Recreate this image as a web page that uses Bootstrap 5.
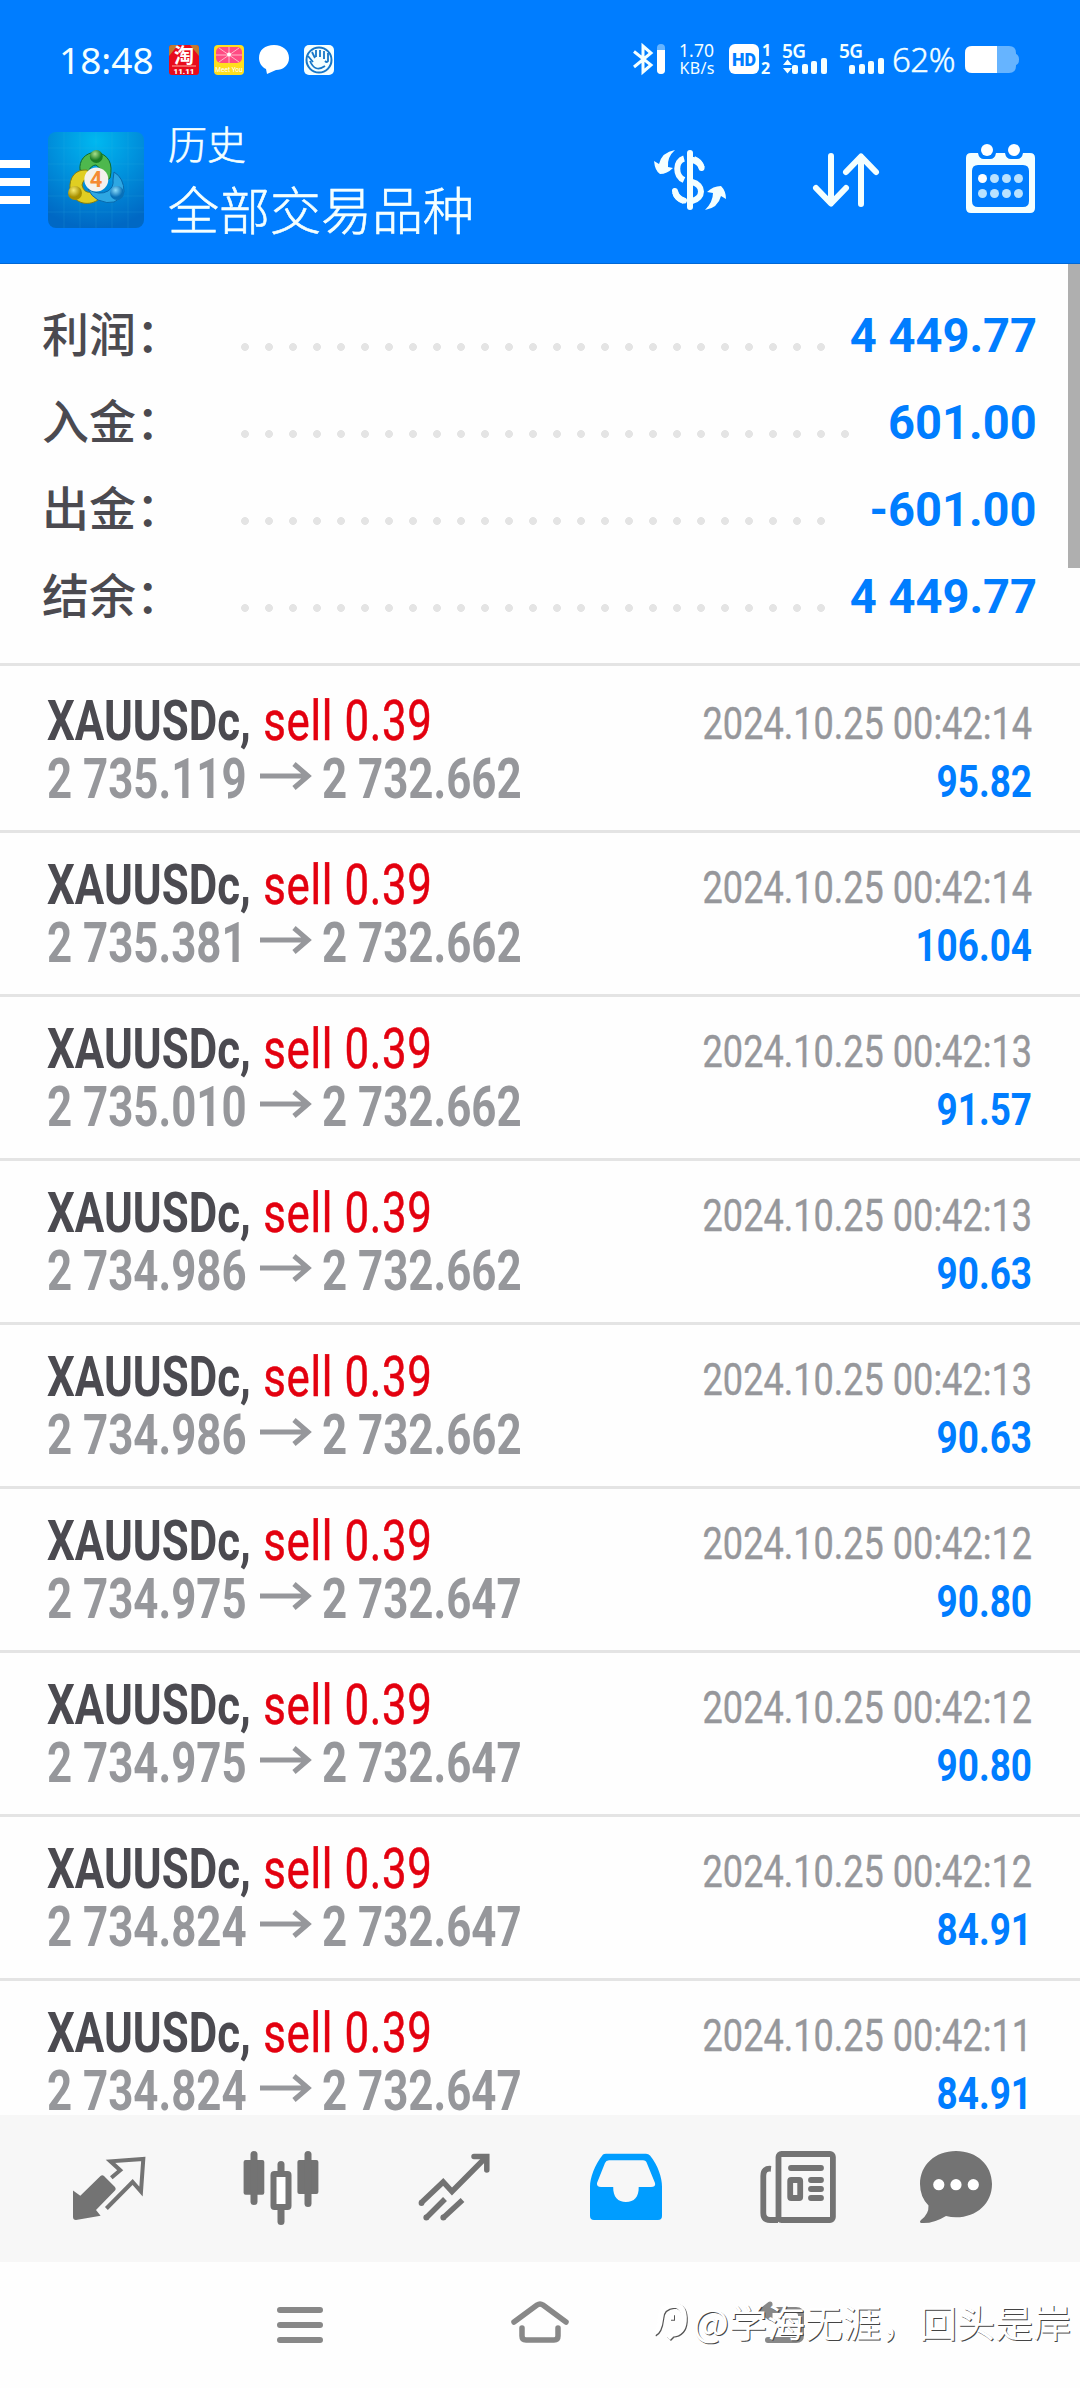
<!DOCTYPE html>
<html lang="zh-CN">
<head>
<meta charset="utf-8">
<meta name="viewport" content="width=device-width, initial-scale=1">
<title>历史</title>
<link href="https://cdn.jsdelivr.net/npm/bootstrap@5.3.0/dist/css/bootstrap.min.css" rel="stylesheet">
<script src="https://cdn.jsdelivr.net/npm/bootstrap@5.3.0/dist/js/bootstrap.bundle.min.js"></script>
<style>
body{width:1080px;height:2388px;background:#fefefe;font-family:Roboto,"Noto Sans CJK SC",sans-serif;color:#4b4a50}
svg{display:block;flex:none;overflow:visible}
.topbar{height:264px;background:#007dff;color:#f4ffff;border-bottom:1px solid #0068d6}
.statusbar{height:106px;padding:14px 60px 0 59px}
.clock{font:400 37px/90px "Noto Sans",sans-serif;width:109px}
.percent{font:300 33px/90px "Noto Sans",sans-serif;width:73px;letter-spacing:-.5px;-webkit-text-stroke:.4px #f4ffff}
.titles{font-family:"Noto Sans CJK SC",sans-serif;font-weight:300;-webkit-text-stroke:.6px #f4ffff;width:480px;flex:none;padding-left:24px}
.t-small{font-size:39px;line-height:52px;margin-top:10px}
.t-big{font-size:51px;line-height:80px}
.summary{height:402px;padding:28px 0 0 43px;border-bottom:3px solid #e4e4e4}
.sumrow{height:87px;line-height:87px}
.sumlabel{font:500 47px/81px "Noto Sans CJK SC",sans-serif;width:198px;flex:none;margin-top:-9px;margin-left:-1px;margin-right:1px}
.leader{flex:none;height:8px;margin-top:23px;background:radial-gradient(circle at 4px 4px,#e4e4e4 3.6px,transparent 4.2px) 0 0/24px 8px repeat-x}
.sumval{color:#007dff;font-weight:700;font-size:48px;flex:none;margin-left:auto;margin-right:43px;text-align:right}
.sumval span{display:inline-block;transform:scaleX(.98);transform-origin:right}
.viewport{height:1449px;overflow:hidden}
.deal{height:164px;border-top:3px solid #e4e4e4;padding:23px 48px 0 47px;line-height:58px;white-space:nowrap}
.deal:first-child{border-top-color:#fefefe}
.sym,.from,.to,.stamp,.gain{font-size:55px;height:58px}
.sym span,.from,.to{display:block;transform:scaleX(.797);transform-origin:left}
.sym{width:400px}.sym b{font-weight:700}.sym i{font-style:normal;color:#e3000f;letter-spacing:.8px;margin-left:2px;-webkit-text-stroke:.5px #e3000f}
.from,.to{color:#96979b;font-weight:700}
.from{width:213px}.to{width:200px}
.route{height:58px}
.arrow{margin:0 10px 7px 0}
.side{width:400px;padding-top:3px}
.stamp,.gain{display:flex;justify-content:flex-end;font-size:45px;transform:scaleX(.802);transform-origin:right}
.stamp{color:#96979b;-webkit-text-stroke:.4px #96979b}
.gain{color:#007dff;font-weight:700;transform:scaleX(.82)}
.tabs{height:147px;background:#f7f7f7;padding:32px 0 0 23px;color:#737373}
.tab{width:172.3px}.tab-last{width:144px}
.sysnav{height:126px;position:relative}
.scroll{position:absolute;right:0;top:264px;width:12px;height:304px;background:#afafaf}
.wmark{position:absolute;left:652px;top:31px;color:#fff;font:400 38px/56px "Noto Sans CJK SC",sans-serif;text-shadow:1px 1px 0 #444;white-space:nowrap}
</style>
</head>
<body class="position-relative overflow-hidden">
<svg width="0" height="0" class="position-absolute"><symbol id="arr" viewBox="0 0 52 28"><path d="M0 14H48M34 2L48 14L34 26" fill="none" stroke="#96979b" stroke-width="5"/></symbol></svg>

<header class="topbar">
  <div class="statusbar d-flex align-items-center">
    <div class="clock">18:48</div>
    <svg width="170" height="32" viewBox="0 0 170 32">
      <rect x="1" y="1" width="30" height="30" rx="3" fill="#e80b1c"/><path d="M1 4q0-3 3-3h6L1 12zM22 1h6q3 0 3 3v8z" fill="#c27a30"/><path d="M4 22h24" stroke="#ffb0a0" stroke-width="1"/>
      <text x="16" y="19" font-family="Noto Sans CJK SC" font-weight="700" font-size="20" fill="#fff" text-anchor="middle">淘</text>
      <text x="16" y="30" font-family="Roboto" font-weight="900" font-size="8" fill="#fff" text-anchor="middle">11.11</text>
      <rect x="46" y="1" width="30" height="30" rx="4" fill="#ffdf1e"/><rect x="48" y="3" width="26" height="16" rx="5" fill="#ff4c84"/><path d="M61 3v16M48 11h26M51 4l20 14M71 4L51 18" stroke="#ffb5c8" stroke-width="1"/><circle cx="61" cy="10.500" r="2" fill="#fff"/>
      <text x="61" y="28" font-family="Roboto" font-size="6.500" fill="#fff" text-anchor="middle">Meet You</text>
      <path d="M106 1c9 0 15 5.500 15 13s-6 12-13 12l-9 4-1-5c-4-2-7-6-7-11 0-8 6-13 15-13z" fill="#fff"/>
      <rect x="136" y="1" width="30" height="30" rx="5" fill="#f4ffff"/><circle cx="151" cy="16" r="12.500" fill="none" stroke="#1677c8" stroke-width="2"/><path d="M140 12l5 6M144 8l3 6M148 6v7M152 6v7M156 7v8M160 9v8q-1 2-3 0M142 17q5 12 15 5" fill="none" stroke="#1677c8" stroke-width="1.800"/>
    </svg>
    <svg class="ms-auto" width="256" height="40" viewBox="0 0 256 40" fill="#f4ffff">
      <path d="M2 11.500L19 25l-8 7V6l8 7L2 27" fill="none" stroke="#f4ffff" stroke-width="3"/>
      <rect x="25" y="4" width="8" height="30" rx="4" fill="#66b4ff"/><path d="M25 10h8v20a4 4 0 0 1-8 0z" fill="#fff"/>
      <g font-family="Noto Sans,sans-serif" font-size="17.500"><text x="47" y="17" textLength="35">1.70</text><text x="47.500" y="34" font-size="16" textLength="35">KB/s</text></g>
      <rect x="97" y="4" width="30" height="30" rx="6" fill="#fff"/><text x="112" y="25.500" font-family="Roboto" font-weight="900" font-size="18" fill="#007dff" text-anchor="middle" textLength="24" lengthAdjust="spacingAndGlyphs">HD</text>
      <g font-family="Noto Sans,sans-serif" font-weight="700" font-size="16"><text x="130" y="16">1</text><text x="129" y="34">2</text></g>
      <g font-family="Noto Sans,sans-serif" font-weight="600" font-size="19"><text x="150" y="18" textLength="24">5G</text><text x="207" y="18" textLength="24">5G</text></g>
      <path d="M151 25l4.500-5.500L160 25zM151 28h9l-4.500 5.500z"/>
      <g id="bars"><rect x="160" y="25" width="6" height="9" rx="2"/><rect x="170" y="24" width="6" height="10" rx="2"/><rect x="179" y="21" width="6" height="13" rx="2"/><rect x="189" y="18" width="6" height="16" rx="2"/></g>
      <use href="#bars" x="57"/>
    </svg>
    <div class="percent ms-1">62%</div>
    <svg width="55" height="28" viewBox="0 0 55 28"><path d="M7 0h37q7 0 7 7v1q3 1 3 5.500T51 19v1q0 7-7 7H7q-7 0-7-7V7q0-7 7-7z" fill="#66b4ff"/><path d="M7 0h25v27H7q-7 0-7-7V7q0-7 7-7z" fill="#fff"/></svg>
  </div>
  <div class="d-flex">
    <svg width="48" height="96" class="mt-4" viewBox="0 0 48 96"><path d="M0 34h30M0 52h30M0 70h30" stroke="#fff" stroke-width="8"/></svg>
    <svg width="96" height="96" viewBox="0 0 96 96" style="margin-top:26px">
      <defs><radialGradient id="bg" cx=".5" cy=".1" r=".9"><stop offset="0" stop-color="#00b8f0"/><stop offset=".5" stop-color="#0090dc"/><stop offset="1" stop-color="#0068c4"/></radialGradient>
      <radialGradient id="gg" cx=".4" cy=".3"><stop offset="0" stop-color="#a8e08c"/><stop offset="1" stop-color="#1a7d24"/></radialGradient>
      <radialGradient id="gy" cx=".4" cy=".3"><stop offset="0" stop-color="#f8ec70"/><stop offset="1" stop-color="#a89000"/></radialGradient>
      <radialGradient id="gb" cx=".4" cy=".3"><stop offset="0" stop-color="#8cdcfa"/><stop offset="1" stop-color="#0870b8"/></radialGradient></defs>
      <rect width="96" height="96" rx="8" fill="url(#bg)"/>
      <path d="M16 0v96M32 0v96M48 0v96M64 0v96M80 0v96M0 16h96M0 32h96M0 48h96M0 64h96M0 80h96" stroke="#38c0ee" stroke-opacity=".15"/>
      <path d="M48 20C36 21 31 29 32 38L40 40Q43 33 48 33Q56 38 57 50L62 46Q67 24 48 20z" fill="#4eb84d" stroke="#106c30"/>
      <path d="M39 38C27 37 21 46 22 57C25 71 39 75 50 68L44 60Q36 62 34 53Q35 47 42 44z" fill="#e0ce22" stroke="#857e10"/>
      <path d="M66 40Q76 46 76 60Q69 76 50 68Q43 64 40 57Q51 64 60 59Q66 55 65 48z" fill="#2da7e3" stroke="#0868ac"/>
      <circle cx="48.300" cy="24.500" r="6.500" fill="url(#gg)"/><circle cx="27" cy="61" r="7" fill="url(#gy)"/><circle cx="69" cy="61" r="7" fill="url(#gb)"/>
      <circle cx="48.300" cy="47.500" r="12" fill="#f4f1ed"/><text x="48" y="55" font-family="Roboto" font-weight="700" font-size="22" text-anchor="middle" fill="#f58a32">4</text>
    </svg>
    <div class="titles"><div class="t-small">历史</div><div class="t-big">全部交易品种</div></div>
    <svg width="76" height="66" viewBox="650 147 76 66" style="margin:41px 0 0 26px">
      <g fill="none" stroke="#f4ffff" stroke-width="6"><path d="M690 153V207" stroke-linecap="round"/><path d="M684 158.500C675 161 675 176 684 180M675 192Q677 199 684 201M694 159Q700 161 702 168" stroke-width="6"/><path d="M675 191q1 7 9 9.500M693 160q7 2 8.500 8" stroke-linecap="round"/><path d="M692 182C704 185 704 198 692 201"/></g>
      <g fill="#f4ffff"><path d="M675 150Q662 152 659 164L654 161Q655 171 660 174Q667 174 673 168L668 167Q667 157 675 150z"/><path d="M705 210Q718 208 721 196L726 199Q726 191 721 186Q713 186 707 192L713 193Q713 202 705 210z"/></g>
    </svg>
    <svg width="70" height="60" viewBox="811 150 70 60" style="margin:44px 0 0 85px"><path d="M831 156V203M816 188L831 203.500L846 188M861 204V157M846 172L861 156.500L876 172" fill="none" stroke="#f4ffff" stroke-width="6" stroke-linecap="round" stroke-linejoin="round"/></svg>
    <svg width="70" height="70" viewBox="966 144 70 70" style="margin:38px 0 0 85px">
      <path fill-rule="evenodd" d="M971 153H978Q979 159 984 159H990Q995 159 996 153H1005Q1006 159 1011 159H1017Q1022 159 1023 153H1030Q1035 153 1035 158V208Q1035 213 1030 213H971Q966 213 966 208V158Q966 153 971 153zM978 165Q972 165 972 171V201Q972 207 978 207H1023Q1029 207 1029 201V171Q1029 165 1023 165z" fill="#f4ffff"/>
      <g fill="#fff"><circle cx="987" cy="150" r="6"/><circle cx="1014" cy="150" r="6"/><circle cx="982.500" cy="178.500" r="4.500"/></g>
      <g fill="#b9e2ff"><circle cx="994.500" cy="178.500" r="4.500"/><circle cx="1006.500" cy="178.500" r="4.500"/><circle cx="1018.500" cy="178.500" r="4.500"/><circle cx="982.500" cy="193.500" r="4.500"/><circle cx="994.500" cy="193.500" r="4.500"/><circle cx="1006.500" cy="193.500" r="4.500"/><circle cx="1018.500" cy="193.500" r="4.500"/></g>
    </svg>
  </div>
</header>

<section class="summary">
  <div class="sumrow d-flex align-items-center"><div class="sumlabel">利润：</div><div class="leader" style="width:600px"></div><div class="sumval ms-auto"><span>4 449.77</span></div></div>
  <div class="sumrow d-flex align-items-center"><div class="sumlabel">入金：</div><div class="leader" style="width:624px"></div><div class="sumval ms-auto"><span>601.00</span></div></div>
  <div class="sumrow d-flex align-items-center"><div class="sumlabel">出金：</div><div class="leader" style="width:600px"></div><div class="sumval ms-auto"><span>-601.00</span></div></div>
  <div class="sumrow d-flex align-items-center"><div class="sumlabel">结余：</div><div class="leader" style="width:600px"></div><div class="sumval ms-auto"><span>4 449.77</span></div></div>
</section>

<main class="viewport">
  <div class="deal d-flex justify-content-between"><div><div class="sym"><span><b>XAUUSDc,</b> <i>sell 0.39</i></span></div><div class="route d-flex align-items-center"><div class="from">2 735.119</div><svg class="arrow" width="52" height="28"><use href="#arr"/></svg><div class="to">2 732.662</div></div></div><div class="side"><div class="stamp">2024.10.25 00:42:14</div><div class="gain">95.82</div></div></div>
  <div class="deal d-flex justify-content-between"><div><div class="sym"><span><b>XAUUSDc,</b> <i>sell 0.39</i></span></div><div class="route d-flex align-items-center"><div class="from">2 735.381</div><svg class="arrow" width="52" height="28"><use href="#arr"/></svg><div class="to">2 732.662</div></div></div><div class="side"><div class="stamp">2024.10.25 00:42:14</div><div class="gain">106.04</div></div></div>
  <div class="deal d-flex justify-content-between"><div><div class="sym"><span><b>XAUUSDc,</b> <i>sell 0.39</i></span></div><div class="route d-flex align-items-center"><div class="from">2 735.010</div><svg class="arrow" width="52" height="28"><use href="#arr"/></svg><div class="to">2 732.662</div></div></div><div class="side"><div class="stamp">2024.10.25 00:42:13</div><div class="gain">91.57</div></div></div>
  <div class="deal d-flex justify-content-between"><div><div class="sym"><span><b>XAUUSDc,</b> <i>sell 0.39</i></span></div><div class="route d-flex align-items-center"><div class="from">2 734.986</div><svg class="arrow" width="52" height="28"><use href="#arr"/></svg><div class="to">2 732.662</div></div></div><div class="side"><div class="stamp">2024.10.25 00:42:13</div><div class="gain">90.63</div></div></div>
  <div class="deal d-flex justify-content-between"><div><div class="sym"><span><b>XAUUSDc,</b> <i>sell 0.39</i></span></div><div class="route d-flex align-items-center"><div class="from">2 734.986</div><svg class="arrow" width="52" height="28"><use href="#arr"/></svg><div class="to">2 732.662</div></div></div><div class="side"><div class="stamp">2024.10.25 00:42:13</div><div class="gain">90.63</div></div></div>
  <div class="deal d-flex justify-content-between"><div><div class="sym"><span><b>XAUUSDc,</b> <i>sell 0.39</i></span></div><div class="route d-flex align-items-center"><div class="from">2 734.975</div><svg class="arrow" width="52" height="28"><use href="#arr"/></svg><div class="to">2 732.647</div></div></div><div class="side"><div class="stamp">2024.10.25 00:42:12</div><div class="gain">90.80</div></div></div>
  <div class="deal d-flex justify-content-between"><div><div class="sym"><span><b>XAUUSDc,</b> <i>sell 0.39</i></span></div><div class="route d-flex align-items-center"><div class="from">2 734.975</div><svg class="arrow" width="52" height="28"><use href="#arr"/></svg><div class="to">2 732.647</div></div></div><div class="side"><div class="stamp">2024.10.25 00:42:12</div><div class="gain">90.80</div></div></div>
  <div class="deal d-flex justify-content-between"><div><div class="sym"><span><b>XAUUSDc,</b> <i>sell 0.39</i></span></div><div class="route d-flex align-items-center"><div class="from">2 734.824</div><svg class="arrow" width="52" height="28"><use href="#arr"/></svg><div class="to">2 732.647</div></div></div><div class="side"><div class="stamp">2024.10.25 00:42:12</div><div class="gain">84.91</div></div></div>
  <div class="deal d-flex justify-content-between"><div><div class="sym"><span><b>XAUUSDc,</b> <i>sell 0.39</i></span></div><div class="route d-flex align-items-center"><div class="from">2 734.824</div><svg class="arrow" width="52" height="28"><use href="#arr"/></svg><div class="to">2 732.647</div></div></div><div class="side"><div class="stamp">2024.10.25 00:42:11</div><div class="gain">84.91</div></div></div>
</main>

<nav class="tabs d-flex">
  <div class="tab d-flex justify-content-center"><svg width="80" height="80" viewBox="0 0 80 80"><path d="M4 43.500L11.300 48.700L31.500 29Q33.300 27.500 35 29L46 40Q47.500 42 46 43.500L27 63L31.600 68.700L7 73Q4 73 4 70z" fill="currentColor"/><path d="M42.300 30.700L51.200 23.200L41.500 14.300L74.300 12L72 44.500L63.600 35L37.400 61.500" fill="none" stroke="currentColor" stroke-width="4"/></svg></div>
  <div class="tab d-flex justify-content-center"><svg width="80" height="80" viewBox="0 0 80 80"><g fill="currentColor"><rect x="2.600" y="13" width="20.700" height="34.700" rx="2"/><rect x="9.500" y="4" width="7" height="54" rx="3.500"/><rect x="56.400" y="13" width="21" height="34" rx="2"/><rect x="63.500" y="4" width="7" height="56" rx="3.500"/><rect x="36.500" y="14" width="7" height="14" rx="3.500"/><rect x="36.500" y="60" width="7" height="18" rx="3.500"/></g><rect x="32.500" y="27" width="15" height="33" rx="1" fill="#fff" stroke="currentColor" stroke-width="6"/></svg></div>
  <div class="tab d-flex justify-content-center"><svg width="80" height="80" viewBox="0 0 80 80"><g fill="none" stroke="currentColor" stroke-width="5.500"><path d="M7 56L29.200 35L38 44.500L72.700 9.500"/><path d="M60 9.500H72.800V23" stroke-linecap="round"/><path d="M31 52L12 71M48.500 53L29 71"/></g><g fill="currentColor"><circle cx="7.500" cy="56" r="2.900"/><circle cx="12.300" cy="70.500" r="2.900"/><circle cx="29.300" cy="70.500" r="2.900"/></g></svg></div>
  <div class="tab d-flex justify-content-center"><svg width="80" height="80" viewBox="0 0 80 80"><path fill="#009dff" fill-rule="evenodd" d="M17 7.500Q18 6.700 20 6.700H60Q62.500 6.700 64 8.500C72 18 76 31 76 39.700V69Q76 73 72 73H8Q4 73 4 69V39.700C4 31 8.500 18 17 7.500zM23 13.300Q20 13.300 19 16L11 36Q10.500 40 15 40H27.200C27 50 32 55 40 55S53 50 52.700 40H65Q70 40 69 36L61 16.500Q60 13.300 57 13.300z"/></svg></div>
  <div class="tab d-flex justify-content-center"><svg width="80" height="80" viewBox="0 0 80 80"><g fill="none" stroke="currentColor" stroke-width="5.800"><rect x="20.500" y="7" width="54.400" height="66" rx="3"/><path d="M13 21.800Q5.300 21 5.300 29V66Q5.300 73 12 73H20"/><rect x="32.200" y="33" width="10" height="18" rx="1"/><path d="M33 21H63M53 33H63M53 42H63M53 51H63" stroke-linecap="round"/></g></svg></div>
  <div class="tab-last d-flex justify-content-center"><svg width="80" height="80" viewBox="0 0 80 80"><path fill="currentColor" d="M40 4C61 4 76 18 76 37S61 70.300 40 70.300Q35 70.300 30 69Q17 77 5 76Q3 75 5 73Q13 67 12.500 58.500Q4 50 4 37C4 18 19 4 40 4z"/><g fill="#fff"><circle cx="22.800" cy="37.700" r="5.600"/><circle cx="40" cy="37.700" r="5.600"/><circle cx="57.300" cy="37.700" r="5.600"/></g></svg></div>
</nav>

<footer class="sysnav d-flex">
  <svg width="60" height="60" viewBox="270 2295 60 60" style="margin:33px 0 0 270px"><path d="M280 2310H320M280 2325H320M280 2340H320" stroke="#888" stroke-width="6" stroke-linecap="round"/></svg>
  <svg width="70" height="60" viewBox="505 2295 70 60" style="margin:33px 0 0 175px"><path d="M514 2322L537 2305Q540 2303 543 2305L566 2322M522 2328V2336Q522 2340 526 2340H554Q558 2340 558 2336V2328" fill="none" stroke="#888" stroke-width="5.500" stroke-linecap="round"/></svg>
  <svg width="60" height="60" viewBox="750 2295 60 60" style="margin:33px 0 0 175px"><path d="M770 2304L761 2311L770 2318z" fill="#888" stroke="#888" stroke-width="5" stroke-linejoin="round"/><path d="M766 2310H796Q801 2310 801 2315V2335Q801 2340 796 2340H768" fill="none" stroke="#888" stroke-width="6" stroke-linecap="round"/></svg>
  <div class="wmark d-flex"><svg width="41" height="56" viewBox="0 0 41 56"><g fill="none" stroke="#555" stroke-width="5.500" stroke-linejoin="round"><path id="wm" d="M3 41Q8 39 9.500 26Q10 14 23 13Q34 14 33 29Q32 41 21 42L17 46M19 25H23"/></g><path d="M3 41Q8 39 9.500 26Q10 14 23 13Q34 14 33 29Q32 41 21 42L17 46M19 25H23" transform="translate(-1,-1)" fill="none" stroke="#fff" stroke-width="5.500" stroke-linejoin="round"/></svg><span>@学海无涯，回头是岸</span></div>
</footer>
<div class="scroll"></div>
</body>
</html>
